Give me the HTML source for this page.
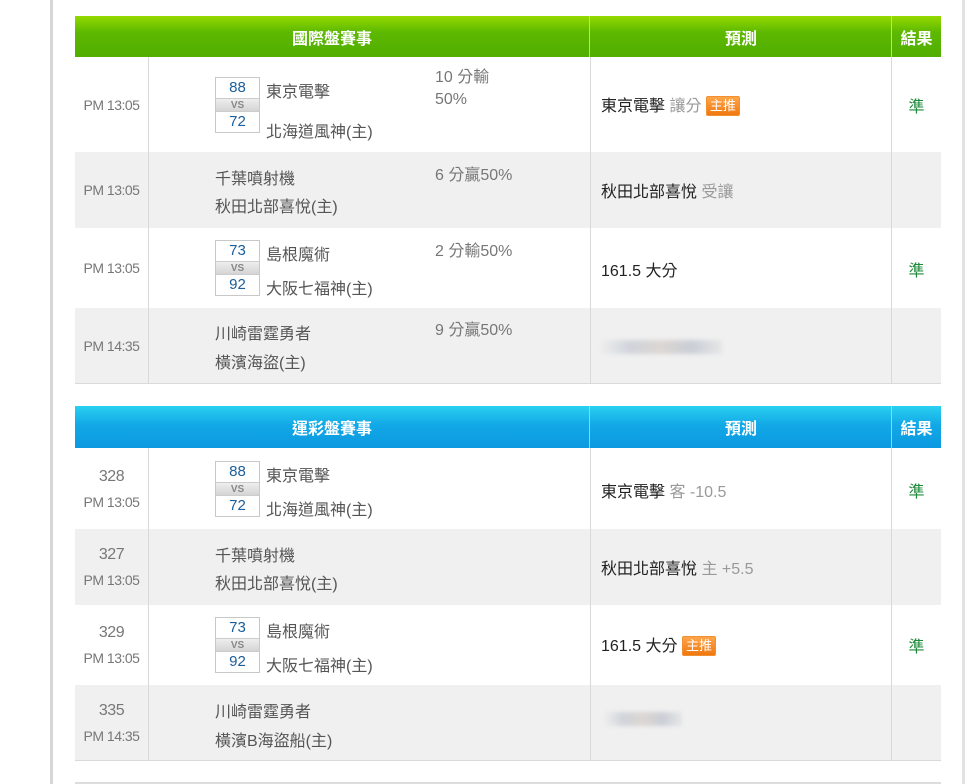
<!DOCTYPE html>
<html><head><meta charset="utf-8"><style>
*{margin:0;padding:0;box-sizing:border-box}
body{width:970px;height:784px;background:#fff;position:relative;overflow:hidden;font-family:"Liberation Sans","Noto Sans CJK TC",sans-serif;}
.a{position:absolute}
.lb{left:50px;top:0;width:3px;height:784px;background:#d6d6d6}
.rb{left:962px;top:0;width:3px;height:784px;background:#e2e2e2}
.hd{color:#fff;font-weight:bold;font-size:16px;display:flex;align-items:center;justify-content:center}
.g{background:linear-gradient(#95d900,#5cb800 40%,#52ae00)}
.b{background:linear-gradient(#2ad0f0,#12a8e6 45%,#0b99e0)}
.row{border-bottom:1px solid #d9d9d9}
.c{position:absolute;top:0;height:100%;border-right:1px solid #d9d9d9}
.t{color:#777;font-size:14px;letter-spacing:-0.5px;text-align:center;display:flex;flex-direction:column;justify-content:center;align-items:center;height:100%}
.t .n{font-size:16px;color:#777;margin-bottom:8px}
.tm{font-size:16px;color:#555;position:absolute;left:266px}
.tm2{font-size:16px;color:#555;position:absolute;left:215px}
.od{font-size:16px;color:#777;position:absolute;left:435px;line-height:22px}
.sb{position:absolute;left:215px;width:45px;border:1px solid #c8c8c8;background:#fff;font-size:15px;color:#1a5e9a;text-align:center}
.sb .s{height:20px;line-height:20px}
.sb .v{height:14px;line-height:14px;background:linear-gradient(#eee,#d4d4d4);color:#888;font-size:10px;font-weight:bold;border-top:1px solid #ccc;border-bottom:1px solid #ccc}
.pr{position:absolute;left:601px;font-size:16px;color:#222}
.pr span.gr{color:#999}
.tag{display:inline-block;background:linear-gradient(#ffa54a,#f07810);color:#fff;font-size:13px;padding:0 3px;line-height:18px;border:1px solid #f09030;border-radius:2px;vertical-align:1px}
.rs{position:absolute;left:892px;width:49px;text-align:center;font-size:16px;color:#1e8a3a}
.blur{position:absolute;height:14px;background:linear-gradient(90deg,#eee,#c8cdd6,#d8d0cc,#c0c6d0,#e4e4e4);filter:blur(2px);opacity:.8}
</style></head><body>
<div class="a lb"></div><div class="a rb"></div>

<!-- Table 1 -->
<div class="a g" style="left:75px;top:16px;width:866px;height:41px"></div>
<div class="a hd" style="left:75px;top:16px;width:515px;height:41px;border-right:1px solid #b6ea5a">國際盤賽事</div>
<div class="a hd" style="left:591px;top:16px;width:301px;height:41px;border-right:1px solid #b6ea5a">預測</div>
<div class="a hd" style="left:892px;top:16px;width:49px;height:41px">結果</div>

<div class="a" style="left:75px;top:57px;width:866px;height:327px;border-left:1px solid #d9d9d9;border-right:1px solid #d9d9d9"></div>

<div class="a row" style="left:75px;top:57px;width:866px;height:96px;background:#fff">
 <div class="c" style="left:0;width:74px"><div class="t">PM 13:05</div></div>
 <div class="c" style="left:74px;width:442px"></div>
 <div class="c" style="left:516px;width:301px"></div>
</div>
<div class="sb" style="top:77px"><div class="s">88</div><div class="v">VS</div><div class="s">72</div></div>
<div class="tm" style="top:78px">東京電擊</div><div class="tm" style="top:118px">北海道風神(主)</div>
<div class="od" style="top:67px">10 分輸<br>50%</div>
<div class="pr" style="top:92px">東京電擊 <span class="gr">讓分</span> <span class="tag">主推</span></div>
<div class="rs" style="top:93px">準</div>

<div class="a row" style="left:75px;top:152px;width:866px;height:77px;background:#f0f0f0">
 <div class="c" style="left:0;width:74px"><div class="t">PM 13:05</div></div>
 <div class="c" style="left:74px;width:442px"></div>
 <div class="c" style="left:516px;width:301px"></div>
</div>
<div class="tm2" style="top:165px">千葉噴射機</div><div class="tm2" style="top:193px">秋田北部喜悅(主)</div>
<div class="od" style="top:165px">6 分贏50%</div>
<div class="pr" style="top:178px">秋田北部喜悅 <span class="gr">受讓</span></div>

<div class="a row" style="left:75px;top:228px;width:866px;height:81px;background:#fff">
 <div class="c" style="left:0;width:74px"><div class="t">PM 13:05</div></div>
 <div class="c" style="left:74px;width:442px"></div>
 <div class="c" style="left:516px;width:301px"></div>
</div>
<div class="sb" style="top:240px"><div class="s">73</div><div class="v">VS</div><div class="s">92</div></div>
<div class="tm" style="top:241px">島根魔術</div><div class="tm" style="top:275px">大阪七福神(主)</div>
<div class="od" style="top:241px">2 分輸50%</div>
<div class="pr" style="top:257px">161.5 大分</div>
<div class="rs" style="top:257px">準</div>

<div class="a row" style="left:75px;top:308px;width:866px;height:76px;background:#f0f0f0">
 <div class="c" style="left:0;width:74px"><div class="t">PM 14:35</div></div>
 <div class="c" style="left:74px;width:442px"></div>
 <div class="c" style="left:516px;width:301px"></div>
</div>
<div class="tm2" style="top:320px">川崎雷霆勇者</div><div class="tm2" style="top:349px">橫濱海盜(主)</div>
<div class="od" style="top:320px">9 分贏50%</div>
<div class="blur" style="left:600px;top:340px;width:122px"></div>

<!-- Table 2 -->
<div class="a b" style="left:75px;top:406px;width:866px;height:42px"></div>
<div class="a hd" style="left:75px;top:406px;width:515px;height:42px;border-right:1px solid #7fdcf6">運彩盤賽事</div>
<div class="a hd" style="left:591px;top:406px;width:301px;height:42px;border-right:1px solid #7fdcf6">預測</div>
<div class="a hd" style="left:892px;top:406px;width:49px;height:42px">結果</div>

<div class="a" style="left:75px;top:448px;width:866px;height:313px;border-left:1px solid #d9d9d9;border-right:1px solid #d9d9d9"></div>

<div class="a row" style="left:75px;top:448px;width:866px;height:82px;background:#fff">
 <div class="c" style="left:0;width:74px"><div class="t"><div class="n">328</div>PM 13:05</div></div>
 <div class="c" style="left:74px;width:442px"></div>
 <div class="c" style="left:516px;width:301px"></div>
</div>
<div class="sb" style="top:461px"><div class="s">88</div><div class="v">VS</div><div class="s">72</div></div>
<div class="tm" style="top:462px">東京電擊</div><div class="tm" style="top:496px">北海道風神(主)</div>
<div class="pr" style="top:478px">東京電擊 <span class="gr">客 -10.5</span></div>
<div class="rs" style="top:478px">準</div>

<div class="a row" style="left:75px;top:529px;width:866px;height:77px;background:#f0f0f0">
 <div class="c" style="left:0;width:74px"><div class="t"><div class="n">327</div>PM 13:05</div></div>
 <div class="c" style="left:74px;width:442px"></div>
 <div class="c" style="left:516px;width:301px"></div>
</div>
<div class="tm2" style="top:542px">千葉噴射機</div><div class="tm2" style="top:570px">秋田北部喜悅(主)</div>
<div class="pr" style="top:555px">秋田北部喜悅 <span class="gr">主 +5.5</span></div>

<div class="a row" style="left:75px;top:605px;width:866px;height:81px;background:#fff">
 <div class="c" style="left:0;width:74px"><div class="t"><div class="n">329</div>PM 13:05</div></div>
 <div class="c" style="left:74px;width:442px"></div>
 <div class="c" style="left:516px;width:301px"></div>
</div>
<div class="sb" style="top:617px"><div class="s">73</div><div class="v">VS</div><div class="s">92</div></div>
<div class="tm" style="top:618px">島根魔術</div><div class="tm" style="top:652px">大阪七福神(主)</div>
<div class="pr" style="top:632px">161.5 大分 <span class="tag">主推</span></div>
<div class="rs" style="top:633px">準</div>

<div class="a row" style="left:75px;top:685px;width:866px;height:76px;background:#f0f0f0">
 <div class="c" style="left:0;width:74px"><div class="t"><div class="n">335</div>PM 14:35</div></div>
 <div class="c" style="left:74px;width:442px"></div>
 <div class="c" style="left:516px;width:301px"></div>
</div>
<div class="tm2" style="top:698px">川崎雷霆勇者</div><div class="tm2" style="top:727px">橫濱B海盜船(主)</div>
<div class="blur" style="left:604px;top:712px;width:78px"></div>

<div class="a" style="left:75px;top:782px;width:866px;height:2px;background:#ddd"></div>
</body></html>
